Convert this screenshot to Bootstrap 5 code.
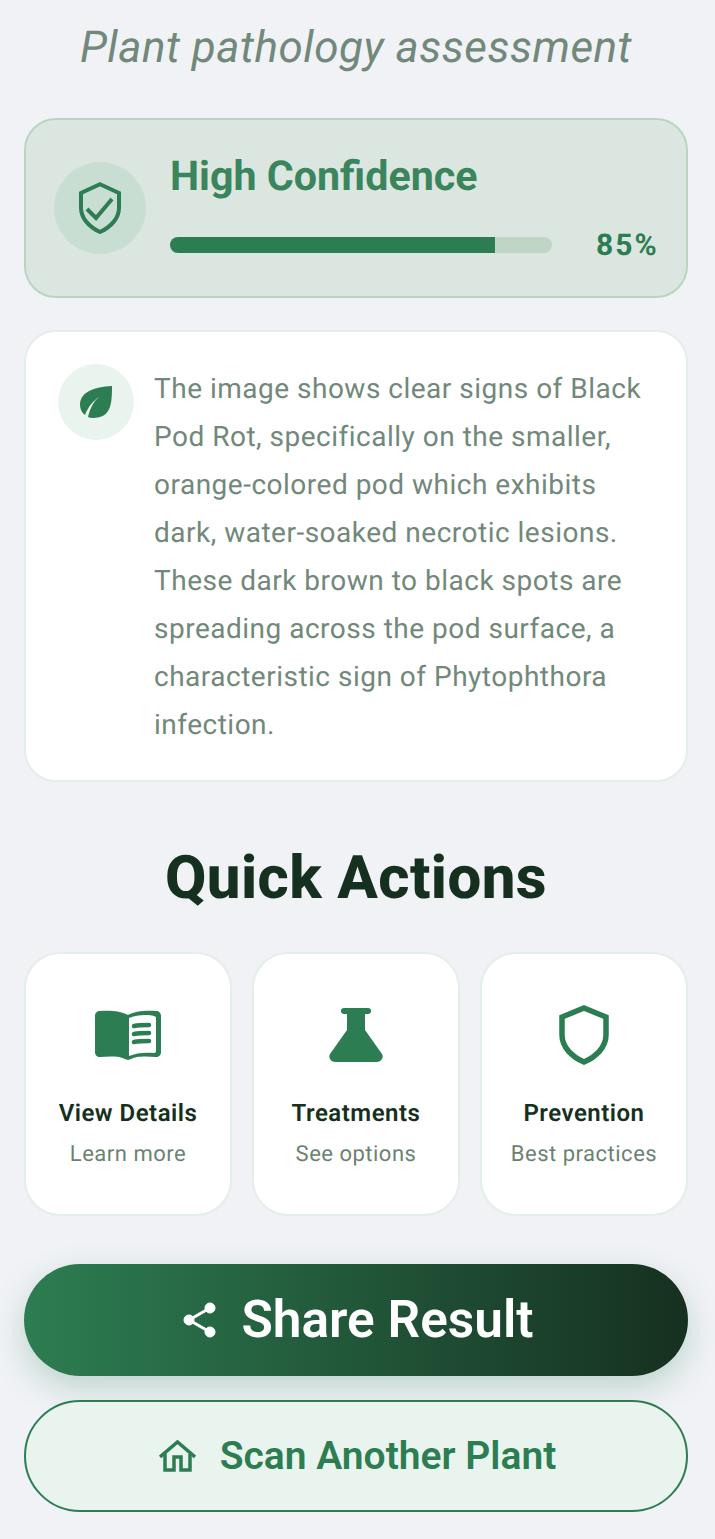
<!DOCTYPE html>
<html lang="en">

<head>
    <meta charset="UTF-8">
    <meta name="viewport" content="width=device-width, initial-scale=1.0">
    <title>Plant pathology assessment</title>
    <link href="https://cdn.jsdelivr.net/npm/bootstrap@5.3.3/dist/css/bootstrap.min.css" rel="stylesheet">
    <style>
        body {
            font-family: Roboto, "Liberation Sans", sans-serif;
            background: #f0f2f6;
            color: #163020;
            text-rendering: geometricPrecision;
        }

        .page-wrap {
            width: 715px;
            height: 1539px;
            padding: 0 27px 0 24px;
            overflow: hidden;
        }

        .page-sub {
            height: 118px;
            padding-top: 20px;
            margin: 0;
            font-size: 44px;
            line-height: 54px;
            font-weight: 400;
            font-style: italic;
            letter-spacing: .5px;
            color: #71887a;
            text-align: center;
        }

        .conf-box {
            height: 180px;
            margin-bottom: 32px;
            padding: 0 30px 3px 28px;
            gap: 24px;
            background: #dce6e0;
            border: 2px solid #b9d5c0;
            border-radius: 32px;
        }

        .conf-circle {
            width: 92px;
            height: 92px;
            flex: none;
            margin-bottom: -3px;
            background: #c9ded3;
        }

        .conf-title {
            margin: 0 0 28px;
            font-size: 41.2px;
            line-height: 48px;
            font-weight: 700;
            color: #3a855c;
        }

        .conf-track {
            width: 382px;
            height: 16px;
            margin-right: 44px;
            background: #bfd6c7;
            border-radius: 8px;
            overflow: hidden;
        }

        .conf-fill {
            height: 100%;
            background: #2d7d52;
        }

        .conf-pct {
            margin: 1px 0 -1px;
            font-size: 30px;
            line-height: 32px;
            font-weight: 700;
            letter-spacing: 2px;
            color: #2d7d52;
        }

        .desc-box {
            height: 452px;
            padding: 33px 32px 0;
            gap: 20px;
            background: #fff;
            border: 2px solid #e4eee9;
            border-radius: 32px;
        }

        .desc-circle {
            width: 76px;
            height: 76px;
            flex: none;
            margin-top: -1px;
            background: #eaf4ef;
        }

        .desc-text {
            margin: 0;
            font-size: 28px;
            line-height: 48px;
            font-weight: 400;
            letter-spacing: .5px;
            color: #71887a;
        }

        .qa-title {
            margin: 60px 0 38px;
            font-size: 60px;
            line-height: 72px;
            font-weight: 800;
            letter-spacing: .4px;
            color: #163020;
            text-align: center;
        }

        .qa-grid {
            display: grid;
            grid-template-columns: repeat(3, 208px);
            gap: 20px;
            margin-bottom: 48px;
        }

        .qa-item {
            height: 264px;
            padding-top: 49px;
            background: #fff;
            border: 2px solid #e4eee9;
            border-radius: 36px;
            text-align: center;
        }

        .qa-icon {
            height: 64px;
            margin-bottom: 30px;
        }

        .qa-name {
            font-size: 24px;
            line-height: 32px;
            font-weight: 600;
            letter-spacing: .5px;
            color: #163020;
        }

        .qa-hint {
            margin-top: 10px;
            font-size: 22px;
            line-height: 32px;
            font-weight: 400;
            letter-spacing: .5px;
            color: #6b8272;
        }

        .btn-share,
        .btn-scan {
            width: 664px;
            height: 112px;
            border-radius: 56px;
            font-weight: 600;
        }

        .btn-share {
            gap: 25px;
            padding: 0 0 0 5px;
            margin-bottom: 24px;
            font-size: 51.4px;
            color: #fff;
            border: 0;
            background: linear-gradient(90deg, #2d7d52, #163020);
            box-shadow: 0 12px 32px rgba(45, 125, 82, .25);
        }

        .btn-scan {
            gap: 24px;
            padding: 0 0 0 3px;
            font-size: 39px;
            color: #2d7d52;
            background: #eaf4ef;
            border: 2px solid #2d7d52;
        }
    </style>
</head>

<body>

    <div class="page-wrap">
        <p class="page-sub">Plant pathology assessment</p>

        <!-- Confidence -->
        <div class="conf-box d-flex align-items-center">
            <div class="conf-circle rounded-circle d-flex align-items-center justify-content-center">
                <svg width="44" height="52" viewBox="0 0 44 52" fill="none" stroke="#2d7d52" stroke-width="4">
                    <path d="M22 2.200 L41 11 V26 C41 36 33 45 22 50 C11 45 3 36 3 26 V11 Z" />
                    <path d="M9 27 L18 36 L34 17" />
                </svg>
            </div>
            <div class="flex-grow-1">
                <h2 class="conf-title">High Confidence</h2>
                <div class="d-flex align-items-center">
                    <div class="conf-track">
                        <div class="conf-fill" style="width: 85%"></div>
                    </div>
                    <div class="conf-pct">85%</div>
                </div>
            </div>
        </div>

        <!-- Description -->
        <div class="desc-box d-flex align-items-start">
            <div class="desc-circle rounded-circle d-flex align-items-center justify-content-center">
                <svg width="32" height="32" viewBox="0 0 32 32" fill="#2d7d52">
                    <path d="M32 0 C32 18 31 32 13 32 C11 32 9 31.500 8 31 C10 23 13 16 19 11 C13 15 8 21 5 29 C2 27 0 23 0 19 C0 6 14 1 32 0 Z" />
                </svg>
            </div>
            <p class="desc-text">The image shows clear signs of Black Pod Rot, specifically on the smaller, orange-colored pod which exhibits dark, water-soaked necrotic lesions. These dark brown to black spots are spreading across the pod surface, a characteristic sign of Phytophthora infection.</p>
        </div>

        <h2 class="qa-title">Quick Actions</h2>

        <div class="qa-grid">
            <div class="qa-item">
                <div class="qa-icon d-flex align-items-center justify-content-center">
                    <svg width="66" height="50" viewBox="0 0 66 50">
                        <path fill="#2d7d52" d="M33 5 C27 1 14 0 5 1 C2 1 0 3 0 6 V42 C0 45 2 47 5 47 C14 46 26 46 30 49 L33 50 L36 49 C40 46 52 46 61 47 C64 47 66 45 66 42 V6 C66 3 64 1 61 1 C52 0 39 1 33 5 Z" />
                        <path fill="#fff" d="M34 8 C41 5 52 4 59 6 C60.500 6.500 61 7 61 8 V41 C61 42 60 43 59 43 C50 42 41 43 34 46 Z" />
                        <g fill="none" stroke="#2d7d52" stroke-width="4.500" stroke-linecap="round">
                            <path d="M39 16 C44 15 49 15 54 15" />
                            <path d="M39 24 C44 23 49 23 54 23" />
                            <path d="M39 32 C44 31 49 31 54 31" />
                        </g>
                    </svg>
                </div>
                <div class="qa-name">View Details</div>
                <div class="qa-hint">Learn more</div>
            </div>
            <div class="qa-item">
                <div class="qa-icon d-flex align-items-center justify-content-center">
                    <svg width="54" height="54" viewBox="0 0 54 54">
                        <path fill="#2d7d52" d="M15 0 H39 A3 3 0 0 1 39 6 H36 V22 L53 46 C55 50 52 54 48 54 H6 C2 54 -1 50 1 46 L18 22 V6 H15 A3 3 0 0 1 15 0 Z" />
                    </svg>
                </div>
                <div class="qa-name">Treatments</div>
                <div class="qa-hint">See options</div>
            </div>
            <div class="qa-item">
                <div class="qa-icon d-flex align-items-center justify-content-center">
                    <svg width="50" height="60" viewBox="0 0 50 60" fill="none" stroke="#2d7d52" stroke-width="5.500">
                        <path d="M25 3 L47 12 V30 C47 42 37 52 25 57 C13 52 3 42 3 30 V12 Z" />
                    </svg>
                </div>
                <div class="qa-name">Prevention</div>
                <div class="qa-hint">Best practices</div>
            </div>
        </div>

        <button type="button" class="btn btn-share d-flex align-items-center justify-content-center">
            <svg width="33" height="36" viewBox="0 0 33 36" fill="#fff" stroke="#fff">
                <circle cx="27" cy="6" r="5" />
                <circle cx="6" cy="18" r="5" />
                <circle cx="27" cy="30" r="5" />
                <path d="M27 6 L6 18 L27 30" fill="none" stroke-width="3" />
            </svg>
            Share Result
        </button>
        <button type="button" class="btn btn-scan d-flex align-items-center justify-content-center">
            <svg width="37" height="32" viewBox="0 0 37 32" fill="none" stroke="#2d7d52" stroke-width="3.500">
                <path d="M1 17 L18.500 2 L36 17" />
                <path d="M6 14 V30 H15 V17 H22 V30 H31 V14" />
            </svg>
            Scan Another Plant
        </button>
    </div>

    <script src="https://cdn.jsdelivr.net/npm/bootstrap@5.3.3/dist/js/bootstrap.bundle.min.js"></script>

</body>

</html>
